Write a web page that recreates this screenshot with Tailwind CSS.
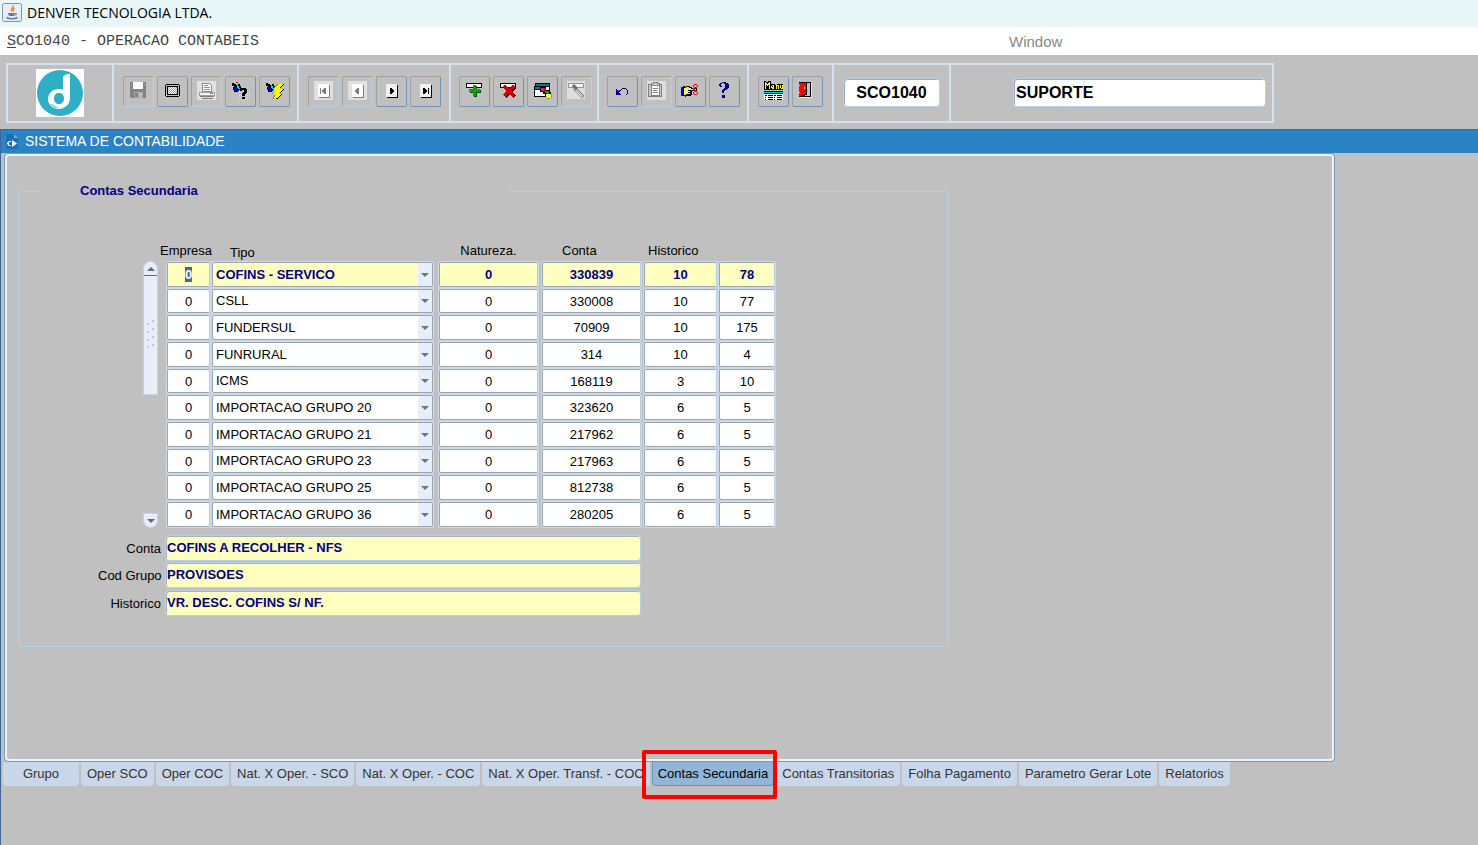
<!DOCTYPE html>
<html lang="pt-BR">
<head>
    <meta charset="UTF-8">
    <meta name="viewport" content="width=device-width, initial-scale=1.0">
    <title>DENVER TECNOLOGIA LTDA.</title>
    <script src="https://cdn.jsdelivr.net/npm/@tailwindcss/browser@4"></script>
</head>
<body class="min-h-screen flex flex-col bg-[#c0c0c0] font-['Liberation_Sans',Arial,sans-serif] text-[13px] text-black">
    <!-- Barra de título -->
    <header class="h-[27px] flex items-center gap-1 pl-[2px] pb-[2px] bg-[#e8f6f8]">
        <svg class="w-5 h-5" viewBox="0 0 20 20" fill="none">
            <rect x="0.5" y="0.5" width="19" height="18" rx="2" fill="#e9eef3" stroke="#7f93a8"/>
            <path d="M11 2.500c2 2-3.500 3-1 6M12.500 5c-2 1.500-1.500 2-.5 3.500" stroke="#e8862e" stroke-width="1.500"/>
            <path d="M6 10h7c0 2-1 3-2 3H8c-1 0-2-1-2-3z" fill="#5580a8"/>
            <path d="M13 10.500c2.500-.5 2.500 1.500-.5 2" stroke="#5580a8"/>
            <path d="M4.500 14.500c3 1.500 8 1.500 11 0" stroke="#5580a8" stroke-width="1.500"/>
        </svg>
        <h1 class="font-['Open_Sans','Noto_Sans',sans-serif] text-sm ml-px">DENVER TECNOLOGIA LTDA.</h1>
    </header>

    <!-- Barra de menu -->
    <nav class="h-7 flex items-center pt-[2px] bg-white text-[15px]">
        <a href="#" class="w-[1001px] pl-[7px] font-['Liberation_Mono','Courier_New',monospace] text-[#444]"><span class="underline underline-offset-2">S</span>CO1040 - OPERACAO CONTABEIS</a>
        <a href="#" class="pl-2 text-[#888]">Window</a>
    </nav>

    <!-- Barra de ferramentas -->
    <div class="pt-2 pb-[6px] pl-[6px]">
        <div class="w-fit h-[60px] flex border-2 border-[#d3e1f1] divide-x-2 divide-[#d3e1f1]">
            <div class="w-[106px] flex items-center justify-center">
                <svg class="w-12 h-12" viewBox="0 0 48 48" fill="none">
                    <path d="M0 0h48v48H0z" fill="#fff"/>
                    <circle cx="24" cy="24" r="23" fill="#2fafc3"/>
                    <path d="M27 9c0-3 3-4 7-4v24c0 6-5 11-11 11-6 0-11-4-11-10s5-10 11-10c2 0 3 .4 4 1zM23 24c-3 0-5 2-5 5.500s2 5.500 5 5.500 5-2 5-5.500-2-5.500-5-5.500z" fill="#fff" fill-rule="evenodd"/>
                    <path d="M15 35c4 5 12 4 16 0" stroke="#2fafc3" stroke-width="1.200"/>
                    <path d="M20 37c5 2 9 0 12-3" stroke="#fff" stroke-width="2"/>
                </svg>
            </div>

            <div class="w-[185px] flex gap-[3px] pt-[11px] pl-[9px]">
                <button aria-label="Salvar" disabled class="w-[31px] h-[31px] border border-t-[#a0a0a0] border-l-[#a0a0a0] border-r-[#b8cfe5] border-b-[#b8cfe5] rounded-xs">
                    <svg class="w-[29px] h-[29px]" viewBox="1 1 29 29" shape-rendering="crispEdges">
                        <path d="M7 6h15l1 1v15H8l-1-1z" fill="#848484"/>
                        <path d="M10 6h10v7H10z" fill="#fff"/>
                        <path d="M11 16h9v6h-9z" fill="#a8a8a8"/>
                        <path d="M12 17h3v4h-3z" fill="#848484"/>
                        <path d="M21 8h1v1h-1zM8 8h1v1H8zM16 17h3v4h-3z" fill="#c0c0c0"/>
                    </svg>
                </button>
                <button aria-label="Tela" class="w-[31px] h-[31px] border border-t-[#a0a0a0] border-l-[#a0a0a0] border-r-[#6f93b7] border-b-[#6f93b7] rounded-xs">
                    <svg class="w-[29px] h-[29px]" viewBox="1 1 29 29" shape-rendering="crispEdges">
                        <path d="M9 8h13v1h1v11h-1v1H9v-1H8V9h1z"/>
                        <path d="M9 9h13v11H9z" fill="#c0c0c0"/>
                        <path d="M10 10h11v9H10z"/>
                        <path d="M11 11h9v7h-9z" fill="#fff"/>
                        <path d="M11 11.500h9M11 13.500h9M11 15.500h9M11 17.500h9" stroke="#3fd0d8" stroke-dasharray="1 1"/>
                        <path d="M12 12.500h8M12 14.500h8M12 16.500h8" stroke="#3fd0d8" stroke-dasharray="1 1"/>
                    </svg>
                </button>
                <button aria-label="Imprimir" disabled class="w-[31px] h-[31px] border border-t-[#a0a0a0] border-l-[#a0a0a0] border-r-[#b8cfe5] border-b-[#b8cfe5] rounded-xs">
                    <svg class="w-[29px] h-[29px]" viewBox="1 1 29 29" shape-rendering="crispEdges" fill="none">
                        <path d="M6 5h19v19H6z" fill="#e0e0e0"/>
                        <path d="M11.500 7.500h7l2 2v6h-9z" fill="#fff" stroke="#8c8c8c"/>
                        <path d="M13 9.500h4M13 11.500h6M13 13.500h6" stroke="#8c8c8c"/>
                        <path d="M8.500 16.500h15v3h-15z" fill="#f4f4f4" stroke="#a0a0a0"/>
                        <path d="M9 20.500h14M11 22.500h11M19 17.500h3" stroke="#7c7c7c"/>
                    </svg>
                </button>
                <button aria-label="Entrar consulta" class="w-[31px] h-[31px] border border-t-[#a0a0a0] border-l-[#a0a0a0] border-r-[#6f93b7] border-b-[#6f93b7] rounded-xs">
                    <svg class="w-[29px] h-[29px]" viewBox="1 1 29 29" shape-rendering="crispEdges" fill="none">
                        <path d="M7 7h2v1h2v1h2v-1h2v2h1v2h1v1h-2v1h-1v1h-1v1H9v-2H8v-3h1v-1H7z" fill="#000"/>
                        <path d="M9 11h2v1h1v3h-2v-1H9z" fill="#0000e0"/>
                        <path d="M12 9h1v1h1v2h1v1h-2v-1h-1z" fill="#00d8e8"/>
                        <path d="M11 6h2v1h-2z" fill="#e00000"/>
                        <path d="M14 15.500h11M14 17.500h11M14 19.500h11M14 21.500h11M16 23.500h9" stroke="#f4f060" stroke-dasharray="1 1"/>
                        <path d="M15 15v-2h1v-1h5v1h1v4h-1v1h-1v2h-3v-3h1v-1h1v-2h-2v1zM17 21h3v2h-3z" fill="#000"/>
                    </svg>
                </button>
                <button aria-label="Executar consulta" class="w-[31px] h-[31px] border border-t-[#a0a0a0] border-l-[#a0a0a0] border-r-[#6f93b7] border-b-[#6f93b7] rounded-xs">
                    <svg class="w-[29px] h-[29px]" viewBox="1 1 29 29" shape-rendering="crispEdges" fill="none">
                        <path d="M7 7h2v1h2v1h2v-1h2v2h1v2h1v1h-2v1h-1v1h-1v1H9v-2H8v-3h1v-1H7z" fill="#000"/>
                        <path d="M9 11h2v1h1v3h-2v-1H9z" fill="#0000e0"/>
                        <path d="M12 9h1v1h1v2h1v1h-2v-1h-1z" fill="#00d8e8"/>
                        <path d="M19 8h5v1h-1v1h-1v1h-1v2h3v1h-1v1h-1v1h-1v1h-1v1h2v1h-1v1h-1v1h-1v1h-2v1h-2v-2h1v-2h1v-1h-3v-1h1v-1h1v-1h1v-1h-3v-1h1v-1h1v-1h1v-1h1z" fill="#ffff00"/>
                        <path d="M18.500 8v1M17.500 9v1M16.500 10v1M15.500 11v1M14.500 12v2M13.500 17v1M14.500 16v1M15.500 19v2M14.500 21v2" stroke="#707070"/>
                        <path d="M24.500 8v1M23.500 9v1M22.500 10v1M21.500 11v1M24.500 13v1M23.500 14v1M22.500 15v1M21.500 16v1M22.500 18v1M21.500 19v1M20.500 20v1M19.500 21v1M17 22.500h2" stroke="#000"/>
                    </svg>
                </button>
            </div>

            <div class="w-[152px] flex gap-[3px] pt-[11px] pl-[9px]">
                <button aria-label="Primeiro" disabled class="w-[31px] h-[31px] border border-t-[#a0a0a0] border-l-[#a0a0a0] border-r-[#b8cfe5] border-b-[#b8cfe5] rounded-xs">
                    <svg class="w-[29px] h-[29px]" viewBox="1 1 29 29" shape-rendering="crispEdges">
                        <path d="M6 5h19v19H6z" fill="#e0e0e0"/>
                        <path d="M11 9h11v13H11z" fill="#808080"/>
                        <path d="M10 8h11v13H10z" fill="#fafafa"/>
                        <path d="M12 12h1v6h-1zM18 12v6h-2v-1h-1v-1h-1v-2h1v-1h1v-1z" fill="#808080"/>
                    </svg>
                </button>
                <button aria-label="Anterior" disabled class="w-[31px] h-[31px] border border-t-[#a0a0a0] border-l-[#a0a0a0] border-r-[#b8cfe5] border-b-[#b8cfe5] rounded-xs">
                    <svg class="w-[29px] h-[29px]" viewBox="1 1 29 29" shape-rendering="crispEdges">
                        <path d="M6 5h19v19H6z" fill="#e0e0e0"/>
                        <path d="M11 9h11v13H11z" fill="#808080"/>
                        <path d="M10 8h11v13H10z" fill="#fafafa"/>
                        <path d="M17 12v6h-2v-1h-1v-1h-1v-2h1v-1h1v-1z" fill="#808080"/>
                    </svg>
                </button>
                <button aria-label="Próximo" class="w-[31px] h-[31px] border border-t-[#a0a0a0] border-l-[#a0a0a0] border-r-[#6f93b7] border-b-[#6f93b7] rounded-xs">
                    <svg class="w-[29px] h-[29px]" viewBox="1 1 29 29" shape-rendering="crispEdges">
                        <path d="M11 9h11v13H11z"/>
                        <path d="M10 8h11v13H10z" fill="#f0f0f0"/>
                        <path d="M14 12h2v1h1v1h1v2h-1v1h-1v1h-2z"/>
                    </svg>
                </button>
                <button aria-label="Último" class="w-[31px] h-[31px] border border-t-[#a0a0a0] border-l-[#a0a0a0] border-r-[#6f93b7] border-b-[#6f93b7] rounded-xs">
                    <svg class="w-[29px] h-[29px]" viewBox="1 1 29 29" shape-rendering="crispEdges">
                        <path d="M11 9h11v13H11z"/>
                        <path d="M10 8h11v13H10z" fill="#f0f0f0"/>
                        <path d="M13 12h2v1h1v1h1v2h-1v1h-1v1h-2zM18 12h1v6h-1z"/>
                    </svg>
                </button>
            </div>

            <div class="w-[148px] flex gap-[3px] pt-[11px] pl-2">
                <button aria-label="Inserir" class="w-[31px] h-[31px] border border-t-[#a0a0a0] border-l-[#a0a0a0] border-r-[#6f93b7] border-b-[#6f93b7] rounded-xs">
                    <svg class="w-[29px] h-[29px]" viewBox="1 1 29 29" shape-rendering="crispEdges">
                        <path d="M7 7h16v5H7z"/>
                        <path d="M8 8h14v3H8z" fill="#fff"/>
                        <path d="M15 10h3v4h4v3h-4v4h-3v-4h-4v-3h4z" fill="#004c00"/>
                        <path d="M14 9h3v4h4v3h-4v4h-3v-4h-4v-3h4z" fill="#00a810"/>
                    </svg>
                </button>
                <button aria-label="Excluir" class="w-[31px] h-[31px] border border-t-[#a0a0a0] border-l-[#a0a0a0] border-r-[#6f93b7] border-b-[#6f93b7] rounded-xs">
                    <svg class="w-[29px] h-[29px]" viewBox="1 1 29 29" shape-rendering="crispEdges" fill="none">
                        <path d="M7 7h16v5H7z" fill="#000"/>
                        <path d="M8 8h14v3H8z" fill="#fff"/>
                        <path d="M12 11l10 10M22 11L12 21" stroke="#500000" stroke-width="3"/>
                        <path d="M11 10l10 10M21 10L11 20" stroke="#d00000" stroke-width="3"/>
                    </svg>
                </button>
                <button aria-label="Limpar tela" class="w-[31px] h-[31px] border border-t-[#a0a0a0] border-l-[#a0a0a0] border-r-[#6f93b7] border-b-[#6f93b7] rounded-xs">
                    <svg class="w-[29px] h-[29px]" viewBox="1 1 29 29" shape-rendering="crispEdges">
                        <path d="M8 7h15v14H8z"/>
                        <path d="M9 8h13v2H9z" fill="#008080"/>
                        <path d="M9 11h13v9H9z" fill="#fff"/>
                        <path d="M7 10h12v11H7z"/>
                        <path d="M8 11h10v2H8z" fill="#008080"/>
                        <path d="M8 14h10v6H8z" fill="#fff"/>
                        <path d="M13 11h6v3h3v2h2v3h-2v1h-3v-2h-3v-2h-3z"/>
                        <path d="M14 12h3v3h-3z" fill="#f000c0"/>
                        <path d="M17 12h2v3h-2z" fill="#e00000"/>
                        <path d="M18 15h4v3h-2v-1h-2z" fill="#00b000"/>
                        <path d="M19 18h5v4h-3v-1h-2z" fill="#fff060"/>
                        <path d="M20 22h3v1h-3zM24 18h1v4h-1z" fill="#a0a000"/>
                    </svg>
                </button>
                <button aria-label="Limpar registro" disabled class="w-[31px] h-[31px] border border-t-[#a0a0a0] border-l-[#a0a0a0] border-r-[#b8cfe5] border-b-[#b8cfe5] rounded-xs">
                    <svg class="w-[29px] h-[29px]" viewBox="1 1 29 29" fill="none">
                        <path d="M6 5h18v18H6z" fill="#dedede"/>
                        <path d="M7.500 7.500h15v4h-15z" fill="#f8f8f8" stroke="#909090"/>
                        <path d="M12 9.500l4 3 7 7.500-2 2-7.500-7.500z" fill="#b4b4b4" stroke="#808080"/>
                        <path d="M15.500 15.500l5.500 5.500" stroke="#fff"/>
                        <path d="M12 9l4 4" stroke="#707070" stroke-width="3"/>
                    </svg>
                </button>
            </div>

            <div class="w-[150px] flex gap-[3px] pt-[11px] pl-2">
                <button aria-label="Desfazer" class="w-[31px] h-[31px] border border-t-[#a0a0a0] border-l-[#a0a0a0] border-r-[#6f93b7] border-b-[#6f93b7] rounded-xs">
                    <svg class="w-[29px] h-[29px]" viewBox="1 1 29 29" shape-rendering="crispEdges" fill="#000080">
                        <path d="M9 13h1v1h1v1h1v-1h2v-1h1v-1h4v1h1v1h1v4h-1v1h-1v-1h1v-4h-1v-1h-4v1h-1v1h-1v1h-1v1h1v1h1v1H9z"/>
                    </svg>
                </button>
                <button aria-label="Lista de valores" disabled class="w-[31px] h-[31px] border border-t-[#a0a0a0] border-l-[#a0a0a0] border-r-[#b8cfe5] border-b-[#b8cfe5] rounded-xs">
                    <svg class="w-[29px] h-[29px]" viewBox="1 1 29 29" shape-rendering="crispEdges" fill="none">
                        <path d="M6 5h19v19H6z" fill="#dedede"/>
                        <path d="M7.500 8.500h13v12h-13z" fill="#c8c8c8" stroke="#808080"/>
                        <path d="M10.500 9.500h8v10h-8z" fill="#fff" stroke="#808080"/>
                        <path d="M10.500 7.500h2v-1h4v1h2v2h-8z" fill="#d0d0d0" stroke="#808080"/>
                        <path d="M12 12.500h5M12 14.500h4M12 16.500h5" stroke="#808080"/>
                    </svg>
                </button>
                <button aria-label="Recortar" class="w-[31px] h-[31px] border border-t-[#a0a0a0] border-l-[#a0a0a0] border-r-[#6f93b7] border-b-[#6f93b7] rounded-xs">
                    <svg class="w-[29px] h-[29px]" viewBox="1 1 29 29" shape-rendering="crispEdges" fill="none">
                        <path d="M6 11h2v9H6z" fill="#0000f0"/>
                        <path d="M8 10h2v1h1v-1h4v1h2v1h5v3h-5v4h-1v1h-5v1h-1v-1H8z" fill="#000"/>
                        <path d="M9 12h2v-1h3v1h2v1h5v1h-6v4h-4v1H9z" fill="#f8f040"/>
                        <path d="M13 14.500h3M13 16.500h3" stroke="#000"/>
                        <path d="M9 13.500h4M9 15.500h4M9 17.500h4" stroke="#fff" stroke-dasharray="1 1"/>
                        <path d="M19 8h3v1h-3zM18 9h1v2h-1zM22 9h1v2h-1zM19 11h3v1h-3zM18 12h2v2h-2zM18 14h3v1h-3zM19 15h3v1h-3zM18 16h1v2h-1zM22 16h1v2h-1zM19 18h3v1h-3z" fill="#ff0000"/>
                    </svg>
                </button>
                <button aria-label="Ajuda" class="w-[31px] h-[31px] border border-t-[#a0a0a0] border-l-[#a0a0a0] border-r-[#6f93b7] border-b-[#6f93b7] rounded-xs">
                    <svg class="w-[29px] h-[29px]" viewBox="1 1 29 29" shape-rendering="crispEdges" fill="#000080">
                        <path d="M10 8h1V7h2V6h4v1h2v1h1v4h-1v1h-1v1h-2v1h-1v2h-2v-3h1v-1h1v-1h1V8h-1V7h-2v1h-1v2h1v1h-2v-1h-1zM13 19h3v3h-3z"/>
                    </svg>
                </button>
            </div>

            <div class="w-[85px] flex gap-[3px] pt-[11px] pl-[9px]">
                <button aria-label="Menu" class="w-[31px] h-[31px] border border-t-[#a0a0a0] border-l-[#a0a0a0] border-r-[#6f93b7] border-b-[#6f93b7] rounded-xs">
                    <svg class="w-[29px] h-[29px]" viewBox="1 1 29 29" shape-rendering="crispEdges" fill="none">
                        <path d="M6 15h19v3H6z" fill="#000"/>
                        <path d="M6 16h19v1H6z" fill="#00d8e8"/>
                        <path d="M6 18h19v6H6z" fill="#fff"/>
                        <path d="M7 19.500h2M10 19.500h5M16 19.500h2M19 19.500h5M7 21.500h1M10 21.500h5M16 21.500h1M19 21.500h5M7 23.500h1M10 23.500h5M16 23.500h1M19 23.500h5" stroke="#000"/>
                        <path d="M6 5h2v1h2V5h3v3h4v1h2V8h6v6H6z" fill="#000"/>
                        <path d="M7.500 6v7M8.500 7v2M9.500 8v2M10.500 7v2M11.500 6v7M14 9.500h2M13.500 10v2M15.500 10v1M14 11.500h2M14 12.500h2M18.500 9v4M19 9.500h1M20.500 9v4M22.500 9v3M23 12.500h2M24.500 9v4" stroke="#ffff00"/>
                    </svg>
                </button>
                <button aria-label="Sair" class="w-[31px] h-[31px] border border-t-[#a0a0a0] border-l-[#a0a0a0] border-r-[#6f93b7] border-b-[#6f93b7] rounded-xs">
                    <svg class="w-[29px] h-[29px]" viewBox="1 1 29 29" shape-rendering="crispEdges">
                        <path d="M7 6h13v16H7z" fill="#e8e8e8"/>
                        <path d="M7 6h12v15H7z"/>
                        <path d="M15 7h3v13h-5v-1h2z" fill="#c0c0c0"/>
                        <path d="M7 7h7v11h-2v1h-2v1H7z" fill="#ff0000"/>
                        <path d="M12 11h1v2h-1zM7 9h1v1H7zM7 16h1v1H7z" fill="#ffff00"/>
                    </svg>
                </button>
            </div>

            <div class="w-[117px] pt-[13px] px-[9px]">
                <input type="text" aria-label="Programa" value="SCO1040" class="w-full h-[29px] bg-white border border-[#b8cfe5] shadow-[inset_1px_1px_0_#98a8b8] rounded-sm text-center text-base font-bold">
            </div>
            <div class="w-[321px] pt-[13px] pl-[62px] pr-[6px]">
                <input type="text" aria-label="Usuário" value="SUPORTE" class="w-full h-[29px] pl-[2px] bg-white border border-[#b8cfe5] shadow-[inset_1px_1px_0_#98a8b8] rounded-sm text-base font-bold">
            </div>
        </div>
    </div>

    <!-- Janela interna -->
    <main class="flex-1 flex flex-col border-l border-[#3f6496]">
        <div class="h-6 flex items-center gap-[7px] pl-[5px] bg-[#2b83c6] border-t border-[#3f6496] text-white">
            <svg class="w-3 h-[15px]" viewBox="0 0 12 15">
                <path d="M0 0h8l4 4v11H0z" fill="#1c70b5"/>
                <path d="M8 0v4h4z" fill="#6fb0e0"/>
                <path d="M5 7v1H3v3h2v1H3l-2-2V9l2-2zM6 6l5 3.500L6 13z" fill="#fff"/>
            </svg>
            <h2 class="text-[14px]">SISTEMA DE CONTABILIDADE</h2>
        </div>

        <section class="flex-1 flex ml-[3px] mr-[143px] border border-[#7a98b8] rounded-sm">
            <div class="flex-1 border-2 border-[#eef3fa] rounded-sm pl-[11px] pt-[25px]">
                <fieldset class="max-w-[931px] h-[466px] border border-[#b8cfe5] rounded-sm pl-[79px]">
                    <legend class="w-[468px] -ml-[57px] pl-[39px] leading-5 font-bold text-[#000080]">Contas Secundaria</legend>

                    <div class="flex gap-[2px] pl-[45px] pt-[41px]">
                        <!-- Barra de rolagem -->
                        <div class="w-[15px] mt-[19px] flex flex-col justify-between">
                            <div class="h-[134px] flex flex-col bg-[#e8eef7] border border-[#c4d4e8] rounded-t-lg">
                                <button aria-label="Subir" class="h-[14px] flex items-center justify-center border-b border-[#5b6f95]">
                                    <svg class="w-2 h-1" viewBox="0 0 8 4"><path d="M4 0l4 4H0z" fill="#5f6b85"/></svg>
                                </button>
                                <svg class="w-[13px] h-[30px] mt-[43px]" viewBox="0 0 13 30" stroke="#8ba5c8" fill="none">
                                    <path d="M3 6l2-2M8 3l2-2M3 14l2-2M8 11l2-2M3 22l2-2M8 19l2-2M3 29l2-2M8 27l2-2"/>
                                </svg>
                            </div>
                            <button aria-label="Descer" class="h-[15px] flex items-center justify-center bg-[#e8eef7] border border-[#c4d4e8] rounded-b-lg">
                                <svg class="w-2 h-1" viewBox="0 0 8 4"><path d="M0 0h8L4 4z" fill="#5f6b85"/></svg>
                            </button>
                        </div>

                        <table class="table-fixed w-[616px]">
                            <colgroup>
                                <col class="w-[51px]">
                                <col class="w-[223px]">
                                <col class="w-[105px]">
                                <col class="w-[103px]">
                                <col class="w-[76px]">
                                <col class="w-[58px]">
                            </colgroup>
                            <thead>
                                <tr class="h-[19px] leading-4 text-left align-top whitespace-nowrap">
                                    <th class="font-normal pt-px">Empresa</th>
                                    <th class="font-normal pl-[19px] align-bottom">Tipo</th>
                                    <th class="font-normal pt-px pl-1 text-center">Natureza.</th>
                                    <th class="font-normal pt-px pl-[23px]">Conta</th>
                                    <th class="font-normal pt-px pl-[6px]">Historico</th>
                                    <th></th>
                                </tr>
                            </thead>
                            <tbody id="linhas"></tbody>
                        </table>
                    </div>

                    <div class="mt-[6px] flex flex-col whitespace-nowrap">
                        <div class="h-[27px] flex items-center gap-1">
                            <label for="descConta" class="w-[63px] pt-[2px] text-right">Conta</label>
                            <input id="descConta" type="text" value="COFINS A RECOLHER - NFS" class="w-[476px] h-[26px] pl-px pb-px bg-[#ffffc0] border border-[#b8cfe5] shadow-[inset_1px_1px_0_#a4b2c2] rounded-sm font-bold text-[#000080]">
                        </div>
                        <div class="h-[27px] flex items-center gap-1">
                            <label for="descGrupo" class="w-[63px] pt-[2px] text-right">Cod Grupo</label>
                            <input id="descGrupo" type="text" value="PROVISOES" class="w-[476px] h-[26px] pl-px pb-px bg-[#ffffc0] border border-[#b8cfe5] shadow-[inset_1px_1px_0_#a4b2c2] rounded-sm font-bold text-[#000080]">
                        </div>
                        <div class="h-[29px] flex items-center gap-1">
                            <label for="descHistorico" class="w-[63px] pt-[2px] text-right">Historico</label>
                            <input id="descHistorico" type="text" value="VR. DESC. COFINS S/ NF." class="w-[476px] h-[26px] pl-px pb-px bg-[#ffffc0] border border-[#b8cfe5] shadow-[inset_1px_1px_0_#a4b2c2] rounded-sm font-bold text-[#000080]">
                        </div>
                    </div>
                </fieldset>
            </div>
        </section>

        <!-- Abas -->
        <div role="tablist" class="h-[83px] flex items-start gap-[2px] ml-[2px] text-[#333] whitespace-nowrap">
            <button role="tab" class="w-[76px] h-6 bg-[#c9d7e9] rounded-b">Grupo</button>
            <button role="tab" class="h-6 px-[6px] bg-[#c9d7e9] rounded-b">Oper SCO</button>
            <button role="tab" class="h-6 px-[6px] bg-[#c9d7e9] rounded-b">Oper COC</button>
            <button role="tab" class="h-6 px-[6px] bg-[#c9d7e9] rounded-b">Nat. X Oper. - SCO</button>
            <button role="tab" class="h-6 px-[6px] bg-[#c9d7e9] rounded-b">Nat. X Oper. - COC</button>
            <button role="tab" class="h-6 px-[6px] bg-[#c9d7e9] rounded-b">Nat. X Oper. Transf. - COC</button>
            <div class="relative">
                <button role="tab" aria-selected="true" class="h-6 px-[5px] bg-[#92b6d8] border border-t-0 border-[#6f93b7] rounded-b text-black">Contas Secundaria</button>
                <div class="absolute -top-[12px] -left-[10px] -right-[3px] h-[49px] border-4 border-[#ff0000] rounded-xs"></div>
            </div>
            <button role="tab" class="h-6 px-[6px] bg-[#c9d7e9] rounded-b">Contas Transitorias</button>
            <button role="tab" class="h-6 px-[6px] bg-[#c9d7e9] rounded-b">Folha Pagamento</button>
            <button role="tab" class="h-6 px-[6px] bg-[#c9d7e9] rounded-b">Parametro Gerar Lote</button>
            <button role="tab" class="h-6 px-[6px] bg-[#c9d7e9] rounded-b">Relatorios</button>
        </div>
    </main>

    <script>
        const contas = [
            ['0', 'COFINS - SERVICO', '0', '330839', '10', '78'],
            ['0', 'CSLL', '0', '330008', '10', '77'],
            ['0', 'FUNDERSUL', '0', '70909', '10', '175'],
            ['0', 'FUNRURAL', '0', '314', '10', '4'],
            ['0', 'ICMS', '0', '168119', '3', '10'],
            ['0', 'IMPORTACAO GRUPO 20', '0', '323620', '6', '5'],
            ['0', 'IMPORTACAO GRUPO 21', '0', '217962', '6', '5'],
            ['0', 'IMPORTACAO GRUPO 23', '0', '217963', '6', '5'],
            ['0', 'IMPORTACAO GRUPO 25', '0', '812738', '6', '5'],
            ['0', 'IMPORTACAO GRUPO 36', '0', '280205', '6', '5']
        ];
        const nomes = ['Empresa', 'Tipo', 'Natureza', 'Conta', 'Historico', 'Complemento'];
        const recuo = ['pl-[6px]', '', 'pl-1', 'pl-[2px]', 'pl-px', ''];

        document.getElementById('linhas').innerHTML = contas.map((linha, i) => {
            const altura = i % 3 === 1 ? 'h-[26px]' : 'h-[27px]';
            // a primeira linha é o registro atual
            const cor = i === 0 ? 'bg-[#ffffc0] font-bold text-[#000080]' : 'bg-white';
            const celulas = linha.map((valor, c) => {
                const rotulo = `${nomes[c]} ${i + 1}`;
                const campo = c === 1
                    ? `<select aria-label="${rotulo}" class="w-full h-full pl-[3px] appearance-none outline-none border border-[#9aa4ae] rounded-xs ${cor}"><option>${valor}</option></select>
                       <span class="absolute right-[2px] inset-y-[2px] w-[14px] flex items-center justify-center bg-[#e8eef7] pointer-events-none"><svg class="w-2 h-1" viewBox="0 0 8 4"><path d="M0 0h8L4 4z" fill="#6b7488"/></svg></span>`
                    : `<input type="text" aria-label="${rotulo}" value="${valor}" class="w-full h-full text-center outline-none border border-[#9aa4ae] border-r-[#b8cfe5] rounded-xs selection:bg-[#4a6792] selection:text-white ${cor}">`;
                return `<td class="p-0 ${recuo[c]}"><div class="relative ${altura} p-px bg-[#ccdaea] rounded-xs">${campo}</div></td>`;
            });
            return `<tr>${celulas.join('')}</tr>`;
        }).join('');

        const primeiro = document.querySelector('#linhas input');
        primeiro.focus();
        primeiro.select();
    </script>
</body>
</html>
